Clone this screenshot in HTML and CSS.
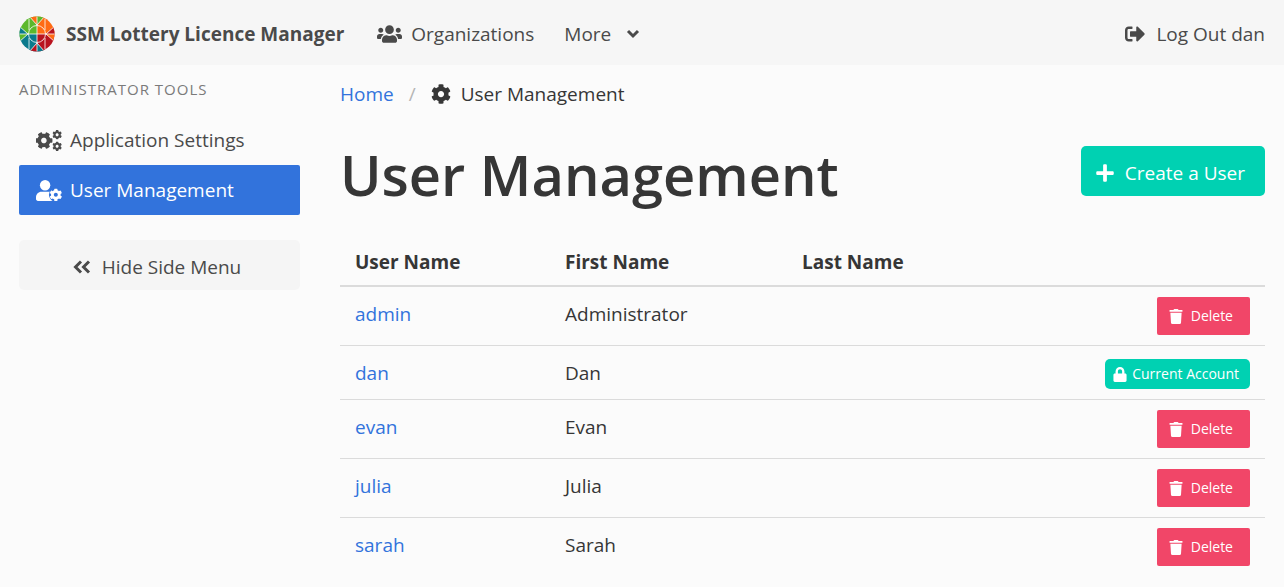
FILE: index.html
```html
<!DOCTYPE html>
<html lang="en">
<head>
<meta charset="utf-8">
<meta name="viewport" content="width=device-width, initial-scale=1">
<title>User Management</title>
<link rel="stylesheet" href="styles.css">
</head>
<body>
<svg class="sprite" aria-hidden="true">
  <symbol id="cog" viewBox="0 0 512 512"><path d="M487.4 315.7l-42.6-24.6c4.3-23.2 4.3-47 0-70.2l42.6-24.6c4.9-2.8 7.1-8.6 5.5-14-11.1-35.6-30-67.8-54.7-94.6-3.8-4.1-10-5.1-14.8-2.3L380.8 110c-17.9-15.4-38.5-27.3-60.8-35.1V25.8c0-5.6-3.9-10.5-9.4-11.7-36.7-8.2-74.3-7.8-109.2 0-5.5 1.2-9.4 6.1-9.4 11.7V75c-22.2 7.9-42.8 19.8-60.8 35.1L88.7 85.5c-4.9-2.8-11-1.9-14.8 2.3-24.7 26.7-43.6 58.9-54.7 94.6-1.7 5.4.6 11.2 5.5 14L67.3 221c-4.3 23.2-4.3 47 0 70.2l-42.6 24.6c-4.9 2.8-7.1 8.6-5.5 14 11.1 35.6 30 67.8 54.7 94.6 3.8 4.1 10 5.1 14.8 2.3l42.6-24.6c17.9 15.4 38.5 27.3 60.8 35.1v49.2c0 5.6 3.9 10.5 9.4 11.7 36.7 8.2 74.3 7.8 109.2 0 5.5-1.2 9.4-6.1 9.4-11.7v-49.2c22.2-7.9 42.8-19.8 60.8-35.1l42.6 24.6c4.9 2.8 11 1.9 14.8-2.3 24.7-26.7 43.6-58.9 54.7-94.6 1.5-5.5-.7-11.3-5.6-14.1zM256 336c-44.1 0-80-35.9-80-80s35.9-80 80-80 80 35.9 80 80-35.9 80-80 80z"/></symbol>
  <symbol id="trash" viewBox="0 0 448 512"><path d="M432 32H312l-9.4-18.7A24 24 0 0 0 281.1 0H166.8a23.72 23.72 0 0 0-21.4 13.3L136 32H16A16 16 0 0 0 0 48v32a16 16 0 0 0 16 16h416a16 16 0 0 0 16-16V48a16 16 0 0 0-16-16zM53.2 467a48 48 0 0 0 47.9 45h245.8a48 48 0 0 0 47.9-45L416 128H32z"/></symbol>
</svg>

<nav class="navbar">
  <a class="brand" href="#">
    <svg class="logo" viewBox="-18 -18 36 36" aria-hidden="true">
      <clipPath id="disc"><circle r="17.5"/></clipPath>
      <g clip-path="url(#disc)">
        <path fill="#5cb82c" d="M-18-18H0V0H-18z"/>
        <path fill="#ff6a13" d="M0-18H18V0H0z"/>
        <path fill="#0a7a8c" d="M-18 0H0V18H-18z"/>
        <path fill="#b9131f" d="M0 0H18V18H0z"/>
        <path fill="#ff6a13" d="M0-9L-8-18H0z"/>
        <path fill="#5cb82c" d="M0-9L8-18H0z"/>
        <path fill="#b9131f" d="M9 0L18-8V0z"/>
        <path fill="#ff6a13" d="M9 0L18 8V0z"/>
        <path fill="#0a7a8c" d="M0 9L8 18H0zM-9 0L-18-8V0z"/>
        <path fill="#b9131f" d="M0 9L-8 18H0z"/>
        <path fill="#5cb82c" d="M-9 0L-18 8V0z"/>
        <g class="logo-lines">
          <path d="M0-18V18M-18 0H18M-8-18L0-9 8-18M-8 18L0 9 8 18M-18-8L-9 0-18 8M18-8L9 0 18 8M-8-15V-4M8-15V-4M-8 15V4M8 15V4"/>
          <circle r="8.5"/>
        </g>
      </g>
    </svg>
    <span>SSM Lottery Licence Manager</span>
  </a>
  <a class="nav-link" href="#">
    <svg class="icon-users" viewBox="0 0 640 512" aria-hidden="true"><path d="M96 224c35.3 0 64-28.7 64-64s-28.7-64-64-64-64 28.7-64 64 28.7 64 64 64zm448 0c35.3 0 64-28.7 64-64s-28.7-64-64-64-64 28.7-64 64 28.7 64 64 64zm32 32h-64c-17.6 0-33.5 7.1-45.1 18.6 40.3 22.1 68.9 62 75.1 109.4h66c17.7 0 32-14.3 32-32v-32c0-35.3-28.7-64-64-64zm-256 0c61.9 0 112-50.1 112-112S381.9 32 320 32 208 82.1 208 144s50.1 112 112 112zm76.8 32h-8.3c-20.8 10-43.9 16-68.5 16s-47.6-6-68.5-16h-8.3C179.6 288 128 339.6 128 403.2V432c0 26.5 21.5 48 48 48h288c26.5 0 48-21.5 48-48v-28.8c0-63.6-51.6-115.2-115.2-115.2zm-223.7-13.4C161.5 263.1 145.6 256 128 256H64c-35.3 0-64 28.7-64 64v32c0 17.7 14.3 32 32 32h65.9c6.3-47.4 34.9-87.3 75.2-109.4z"/></svg>
    <span>Organizations</span>
  </a>
  <button class="nav-link nav-more" type="button">
    <span>More</span>
    <svg class="icon-chevron" viewBox="0 0 14 10" aria-hidden="true"><path d="M2 2l5 5 5-5"/></svg>
  </button>
  <a class="nav-link nav-end" href="#">
    <svg class="icon" viewBox="0 0 512 512" aria-hidden="true"><path d="M497 273L329 441c-15 15-41 4.5-41-17v-96H152c-13.3 0-24-10.7-24-24v-96c0-13.3 10.7-24 24-24h136V88c0-21.4 25.9-32 41-17l168 168c9.3 9.4 9.3 24.6 0 34zM192 436v-40c0-6.6-5.4-12-12-12H96c-17.7 0-32-14.3-32-32V160c0-17.7 14.3-32 32-32h84c6.6 0 12-5.4 12-12V76c0-6.6-5.4-12-12-12H96c-53 0-96 43-96 96v192c0 53 43 96 96 96h84c6.6 0 12-5.4 12-12z"/></svg>
    <span>Log Out dan</span>
  </a>
</nav>

<div class="layout">
  <aside class="sidebar">
    <p class="menu-label">Administrator Tools</p>
    <a class="menu-item" href="#">
      <svg class="icon-wide" viewBox="0 0 640 512" aria-hidden="true">
        <use href="#cog" x="-24" y="38" width="436" height="436" transform="rotate(30 194 256)"/>
        <use href="#cog" x="400" y="-6" width="240" height="240"/>
        <use href="#cog" x="400" y="278" width="240" height="240"/>
      </svg>
      <span>Application Settings</span>
    </a>
    <a class="menu-item is-active" href="#">
      <svg class="icon-wide" viewBox="0 0 640 512" aria-hidden="true">
        <circle cx="224" cy="128" r="128"/>
        <path d="M134 288h180c74 0 134 60 134 134v42c0 26-22 48-48 48H48c-26 0-48-22-48-48v-42c0-74 60-134 134-134z"/>
        <circle class="cutout" cx="488" cy="362" r="170"/>
        <use href="#cog" x="330" y="204" width="316" height="316"/>
      </svg>
      <span>User Management</span>
    </a>
    <button class="button hide-menu" type="button">
      <svg class="icon-double" viewBox="0 0 18 14" aria-hidden="true"><path d="M8 1.500L2.500 7 8 12.500M16 1.500L10.500 7 16 12.500"/></svg>
      <span>Hide Side Menu</span>
    </button>
  </aside>

  <main class="main">
    <nav class="breadcrumb" aria-label="Breadcrumb">
      <a href="#">Home</a>
      <span class="separator">/</span>
      <svg class="icon" viewBox="0 0 512 512" aria-hidden="true"><use href="#cog"/></svg>
      <span>User Management</span>
    </nav>
    <header class="heading">
      <h1>User Management</h1>
      <button class="button create" type="button">
        <svg class="icon-plus" viewBox="0 0 448 512" aria-hidden="true"><path d="M416 208H272V64c0-17.670-14.330-32-32-32h-32c-17.670 0-32 14.330-32 32v144H32c-17.670 0-32 14.330-32 32v32c0 17.670 14.330 32 32 32h144v144c0 17.670 14.330 32 32 32h32c17.670 0 32-14.330 32-32V304h144c17.670 0 32-14.330 32-32v-32c0-17.670-14.330-32-32-32z"/></svg>
        <span>Create a User</span>
      </button>
    </header>
    <table class="users">
      <colgroup><col class="col-user"><col class="col-first"><col class="col-last"><col></colgroup>
      <thead>
        <tr><th scope="col">User Name</th><th scope="col">First Name</th><th scope="col">Last Name</th><td></td></tr>
      </thead>
      <tbody>
        <tr><td><a href="#">admin</a></td><td>Administrator</td><td></td><td><button class="delete" type="button"><svg class="icon-trash" aria-hidden="true"><use href="#trash"/></svg><span>Delete</span></button></td></tr>
        <tr><td><a href="#">dan</a></td><td>Dan</td><td></td><td class="current"><span class="tag"><svg class="icon-trash" viewBox="0 0 448 512" aria-hidden="true"><path d="M400 224h-24v-72C376 68.200 307.800 0 224 0S72 68.200 72 152v72H48c-26.500 0-48 21.500-48 48v192c0 26.500 21.500 48 48 48h352c26.500 0 48-21.500 48-48V272c0-26.500-21.500-48-48-48zm-104 0H152v-72c0-39.700 32.300-72 72-72s72 32.300 72 72v72z"/></svg><span>Current Account</span></span></td></tr>
        <tr><td><a href="#">evan</a></td><td>Evan</td><td></td><td><button class="delete" type="button"><svg class="icon-trash" aria-hidden="true"><use href="#trash"/></svg><span>Delete</span></button></td></tr>
        <tr><td><a href="#">julia</a></td><td>Julia</td><td></td><td><button class="delete" type="button"><svg class="icon-trash" aria-hidden="true"><use href="#trash"/></svg><span>Delete</span></button></td></tr>
        <tr><td><a href="#">sarah</a></td><td>Sarah</td><td></td><td><button class="delete" type="button"><svg class="icon-trash" aria-hidden="true"><use href="#trash"/></svg><span>Delete</span></button></td></tr>
      </tbody>
    </table>
  </main>
</div>
</body>
</html>
```

FILE: styles.css
```css
* { box-sizing: border-box; }
body {
  margin: 0;
  background: #fbfbfb;
  color: #363636;
  font: 19px/30px "Open Sans", "Noto Sans", sans-serif;
}
a { color: #3273dc; text-decoration: none; }
button { font: inherit; border: 0; cursor: pointer; }
svg { fill: currentColor; flex: none; }
.sprite { display: none; }

.navbar {
  display: flex;
  align-items: center;
  height: 65px;
  padding: 2px 19px 0;
  background: #f6f6f6;
}
.brand, .nav-link {
  display: flex;
  align-items: center;
  color: #4a4a4a;
  background: none;
}
.brand { gap: 11px; font-weight: 700; }
.logo { width: 36px; height: 36px; }
.logo-lines { fill: none; stroke: #fff; stroke-width: 0.8; }
.nav-link { gap: 9px; margin-left: 33px; padding: 0; }
.nav-more { gap: 15px; margin-left: 30px; }
.nav-end { gap: 11px; margin-left: auto; }
.icon { width: 20px; height: 20px; }
.icon-users { width: 25px; height: 20px; }
.icon-wide { width: 26px; height: 21px; }
.icon-chevron { width: 14px; height: 10px; }
.icon-double { width: 18px; height: 14px; }
.icon-chevron, .icon-double { fill: none; stroke: currentColor; stroke-width: 3; }
.icon-plus { width: 18px; height: 20px; }
.icon-trash { width: 14px; height: 15px; }

.layout {
  display: grid;
  grid-template-columns: 281px minmax(0, 1fr);
  gap: 40px;
  padding: 15px 19px;
}
.menu-label {
  margin: 0 0 17px;
  color: #7a7a7a;
  font-size: 15px;
  line-height: 18px;
  letter-spacing: 1px;
  text-transform: uppercase;
}
.menu-item {
  display: flex;
  align-items: center;
  gap: 8px;
  height: 50px;
  padding: 0 17px;
  border-radius: 2px;
  color: #4a4a4a;
}
.is-active { background: #3273dc; color: #fff; }
.cutout { fill: #3273dc; }
.button {
  display: flex;
  align-items: center;
  justify-content: center;
  height: 50px;
  padding: 3px 20px 0 15px;
  border-radius: 5px;
}
.hide-menu { gap: 11px; width: 100%; margin-top: 25px; background: #f5f5f5; color: #4a4a4a; }
.create { gap: 11px; background: #00d1b2; color: #fff; }

.breadcrumb { display: flex; align-items: center; height: 28px; }
.separator { margin: 0 15px; color: #b5b5b5; }
.breadcrumb .icon { margin-right: 10px; }
.heading {
  display: flex;
  align-items: flex-start;
  justify-content: space-between;
  margin: 38px 0 33px;
}
h1 { margin: 0; font-size: 56px; font-weight: 600; line-height: 56px; }

.users { width: 100%; border-collapse: separate; border-spacing: 0; table-layout: fixed; }
.col-user { width: 210px; }
.col-first { width: 237px; }
.col-last { width: 214px; }
.users th, .users td { padding: 10px 15px; text-align: left; vertical-align: top; }
.users th, .users td:not(:last-child) { padding-top: 12px; padding-bottom: 8px; }
.users thead th, .users thead td { border-bottom: 2px solid #dbdbdb; }
.users tbody tr:not(:last-child) td { border-bottom: 1px solid #dbdbdb; }
.users td:last-child { text-align: right; }
.users .current { padding-top: 13px; }
.delete, .tag {
  display: inline-flex;
  align-items: center;
  vertical-align: top;
  border-radius: 2px;
  background: #f14668;
  color: #fff;
  font-size: 14px;
}
.delete { gap: 8px; height: 38px; padding: 0 17px 0 12px; }
.tag { gap: 5px; height: 30px; padding: 0 11px 0 8px; border-radius: 5px; background: #00d1b2; }
```
